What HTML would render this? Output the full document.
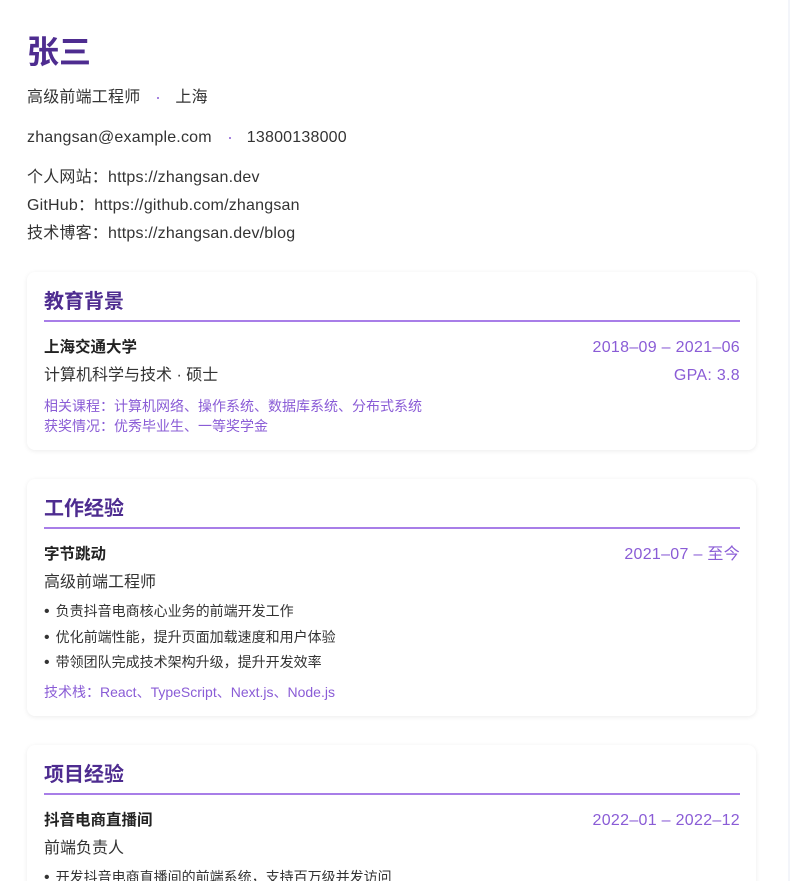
<!DOCTYPE html>
<html><head><meta charset="utf-8"><style>
*{margin:0;padding:0;box-sizing:border-box}
html,body{width:790px;height:881px;overflow:hidden;background:#fff}
body{font-family:"Liberation Sans","Noto Sans CJK SC",sans-serif;color:#333;position:relative}
.strip{position:absolute;right:0;top:0;width:2px;height:881px;background:#f3f5fa}
.wrap{padding:32px 34px 0 27px;width:790px}
h1{font-size:32px;line-height:40px;color:#4e2c90;font-weight:700}
.sub{font-size:16px;line-height:24px;margin-top:14px;color:#333;letter-spacing:0.2px}
.sub2{margin-top:16px}
.dot{display:inline-block;width:2px;height:2px;border-radius:50%;background:#8a5cd6;vertical-align:middle;margin:0 16px 0 17px}
.links{margin-top:14px;font-size:16px;line-height:28px;color:#333;letter-spacing:0.2px}
.card{width:729px;background:#fff;border-radius:8px;box-shadow:0 1px 5px rgba(0,0,0,0.08);padding:14px 16px 16px 17px;margin-top:24px}
.card+.card{margin-top:29px}
.card h2{font-size:20px;line-height:28px;color:#4e2c90;font-weight:700;border-bottom:2px solid #a87ee8;padding-top:2px;padding-bottom:4px}
.row{display:flex;justify-content:space-between;font-size:16px;line-height:28px}
.r1{margin-top:10px}
.row,.sm,li{position:relative;top:2px}
.b{font-weight:700;color:#222;font-size:15.5px}
.p{color:#8a5cd6;letter-spacing:0.3px}
.sm{font-size:14px;line-height:20px;color:#8a5cd6}
.m6{margin-top:6px}
ul{list-style:none;margin-top:2px}
li{font-size:14px;line-height:25.5px;color:#333}
li:before{content:"•";margin-right:6px;color:#333;font-size:16px}
</style></head><body>
<div class="strip"></div>
<div class="wrap">
<h1>张三</h1>
<div class="sub">高级前端工程师<span class="dot"></span>上海</div>
<div class="sub sub2">zhangsan@example.com<span class="dot"></span>13800138000</div>
<div class="links">个人网站：https://zhangsan.dev<br>GitHub：https://github.com/zhangsan<br>技术博客：https://zhangsan.dev/blog</div>

<div class="card">
<h2>教育背景</h2>
<div class="row r1"><span class="b">上海交通大学</span><span class="p">2018–09 – 2021–06</span></div>
<div class="row"><span>计算机科学与技术 · 硕士</span><span class="p">GPA: 3.8</span></div>
<div class="sm m6">相关课程：计算机网络、操作系统、数据库系统、分布式系统</div>
<div class="sm">获奖情况：优秀毕业生、一等奖学金</div>
</div>

<div class="card">
<h2>工作经验</h2>
<div class="row r1"><span class="b">字节跳动</span><span class="p">2021–07 – 至今</span></div>
<div class="row"><span>高级前端工程师</span></div>
<ul><li>负责抖音电商核心业务的前端开发工作</li><li>优化前端性能，提升页面加载速度和用户体验</li><li>带领团队完成技术架构升级，提升开发效率</li></ul>
<div class="sm" style="margin-top:6.5px">技术栈：React、TypeScript、Next.js、Node.js</div>
</div>

<div class="card">
<h2>项目经验</h2>
<div class="row r1"><span class="b">抖音电商直播间</span><span class="p">2022–01 – 2022–12</span></div>
<div class="row"><span>前端负责人</span></div>
<ul><li>开发抖音电商直播间的前端系统，支持百万级并发访问</li></ul>
</div>
</div>
</body></html>
